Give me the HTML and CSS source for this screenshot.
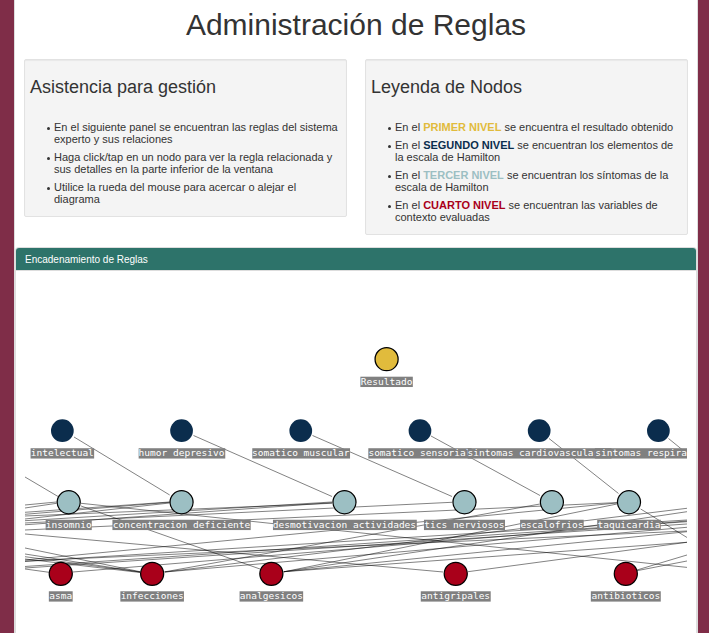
FILE: index.html
```html
<!DOCTYPE html>
<html lang="es">
<head>
<meta charset="utf-8">
<meta name="viewport" content="width=device-width, initial-scale=1">
<title>Administración de Reglas</title>
<link rel="stylesheet" href="styles.css">
</head>
<body>
<main class="page">
  <h1 class="title">Administración de Reglas</h1>
  <div class="intro">
    <section class="well">
      <h2 class="well-title">Asistencia para gestión</h2>
      <ul class="notes">
        <li>En el siguiente panel se encuentran las reglas del sistema experto y sus relaciones</li>
        <li>Haga click/tap en un nodo para ver la regla relacionada y sus detalles en la parte inferior de la ventana</li>
        <li>Utilice la rueda del mouse para acercar o alejar el diagrama</li>
      </ul>
    </section>
    <section class="well">
      <h2 class="well-title">Leyenda de Nodos</h2>
      <ul class="notes">
        <li>En el <strong class="level-1">PRIMER NIVEL</strong> se encuentra el resultado obtenido</li>
        <li>En el <strong class="level-2">SEGUNDO NIVEL</strong> se encuentran los elementos de la escala de Hamilton</li>
        <li>En el <strong class="level-3">TERCER NIVEL</strong> se encuentran los síntomas de la escala de Hamilton</li>
        <li>En el <strong class="level-4">CUARTO NIVEL</strong> se encuentran las variables de contexto evaluadas</li>
      </ul>
    </section>
  </div>
  <section class="panel">
    <h2 class="panel-heading">Encadenamiento de Reglas</h2>
    <div class="panel-body">
      <svg class="graph" viewBox="0 0 833 455" role="img" aria-label="Encadenamiento de Reglas">
        <g class="edges" transform="scale(1.2583) translate(-25 -271)">
          <path d="M74 437L169.700 495M193.500 435.500L332 496.500M312.500 435.500L452 496.500M431 436L540 495.500M549 438.500L618.500 493.500M668.500 438.500L690 456M25 477L58 496.500"/>
          <path d="M81 506L260 569M81 503.300L687 567.400M640.700 509L687 537.500"/>
          <path d="M56.700 502L25 505M56.700 503.300L25 508"/>
          <path d="M169.700 502L25 512.300"/><path d="M169.700 502.300L25 514.300"/><path d="M169.700 503L25 519"/>
          <path d="M332 502L25 520.700"/><path d="M332 502.700L25 524.800"/><path d="M332 503.300L25 516"/>
          <path d="M452 502.300L25 523"/><path d="M617 502.600L25 530"/>
          <path d="M540 504L164 572"/><path d="M617 503L25 560"/><path d="M617 504L283 572"/>
          <path d="M284 571.700L687 511.700"/><path d="M284 571.700L687 531.700"/><path d="M284 571.700L687 542.300"/>
          <path d="M468 571.700L687 542.300"/>
          <path d="M165 572L687 508.300"/><path d="M165 572L687 527.300"/>
          <path d="M687 520L25 561.500"/><path d="M687 521.700L25 566.500"/><path d="M687 524L25 568"/><path d="M687 531L25 561"/>
          <path d="M73 572L687 521"/>
          <path d="M25 534L443 572"/>
          <path d="M25 548L140 571.700"/><path d="M25 554L140 572"/><path d="M25 556.700L140 572"/><path d="M25 559L140 572.500"/>
          <path d="M25 569L49 572.300"/>
          <path d="M637 570L687 555"/><path d="M637 570.700L687 561"/>
        </g>
        <g class="node level-1"><circle cx="455" cy="111" r="14.500"/><rect x="422" y="133" width="66" height="13"/><text x="455" y="143">Resultado</text></g>
        <g class="node level-2"><circle cx="47" cy="201" r="14.300"/><rect x="7" y="223" width="80" height="13"/><text x="47" y="233">intelectual</text></g>
        <g class="node level-2"><circle cx="197" cy="201" r="14.300"/><rect x="143" y="223" width="109" height="13"/><text x="197" y="233">humor depresivo</text></g>
        <g class="node level-2"><circle cx="347" cy="201" r="14.300"/><rect x="286" y="223" width="123" height="13"/><text x="347" y="233">somatico muscular</text></g>
        <g class="node level-2"><circle cx="497" cy="201" r="14.300"/><rect x="432" y="223" width="130" height="13"/><text x="497" y="233">somatico sensorial</text></g>
        <g class="node level-2"><circle cx="647" cy="201" r="14.300"/><rect x="557" y="223" width="181" height="13"/><text x="647" y="233">sintomas cardiovasculares</text></g>
        <g class="node level-2"><circle cx="797" cy="201" r="14.300"/><rect x="717" y="223" width="160" height="13"/><text x="797" y="233">sintomas respiratorios</text></g>
        <g class="node level-3"><circle cx="55" cy="291" r="14.500"/><rect x="26" y="313" width="58" height="13"/><text x="55" y="323">insomnio</text></g>
        <g class="node level-3"><circle cx="197" cy="291" r="14.500"/><rect x="110" y="313" width="174" height="13"/><text x="197" y="323">concentracion deficiente</text></g>
        <g class="node level-3"><circle cx="402" cy="291" r="14.500"/><rect x="312" y="313" width="181" height="13"/><text x="402" y="323">desmotivacion actividades</text></g>
        <g class="node level-3"><circle cx="553" cy="291" r="14.500"/><rect x="502" y="313" width="102" height="13"/><text x="553" y="323">tics nerviosos</text></g>
        <g class="node level-3"><circle cx="663" cy="291" r="14.500"/><rect x="623" y="313" width="80" height="13"/><text x="663" y="323">escalofrios</text></g>
        <g class="node level-3"><circle cx="760" cy="291" r="14.500"/><rect x="720" y="313" width="80" height="13"/><text x="760" y="323">taquicardia</text></g>
        <g class="node level-4"><circle cx="45" cy="381" r="14.500"/><rect x="30" y="403" width="30" height="13"/><text x="45" y="413">asma</text></g>
        <g class="node level-4"><circle cx="160" cy="381" r="14.500"/><rect x="120" y="403" width="80" height="13"/><text x="160" y="413">infecciones</text></g>
        <g class="node level-4"><circle cx="310" cy="381" r="14.500"/><rect x="270" y="403" width="80" height="13"/><text x="310" y="413">analgesicos</text></g>
        <g class="node level-4"><circle cx="542" cy="381" r="14.500"/><rect x="498" y="403" width="88" height="13"/><text x="542" y="413">antigripales</text></g>
        <g class="node level-4"><circle cx="756" cy="381" r="14.500"/><rect x="712" y="403" width="88" height="13"/><text x="756" y="413">antibioticos</text></g>
      </svg>
    </div>
  </section>
</main>
</body>
</html>
```
FILE: styles.css
```css
* { box-sizing: border-box; }

body {
  margin: 0;
  padding: 0 11px 0 14px;
  background: #7f2d48;
  color: #333;
  font: 11px/12px "Liberation Sans", Arial, sans-serif;
}

.page {
  min-height: 100vh;
  background: #fff;
  border: solid #ddd;
  border-width: 0 1px;
}

.title {
  margin: 0;
  padding: 8px 0 18px;
  font-size: 30px;
  font-weight: 400;
  line-height: 33px;
  text-align: center;
}

.intro {
  display: grid;
  grid-template-columns: 1fr 1fr;
  align-items: start;
  gap: 18px;
  padding: 0 9px;
}

.well {
  padding: 5px;
  background: #f4f4f4;
  border: 1px solid #e2e2e2;
  border-radius: 2px;
  box-shadow: inset 0 1px 1px rgba(0, 0, 0, .05);
}

.well-title {
  margin: 12px 0 23px;
  font-size: 18px;
  font-weight: 400;
  line-height: 21px;
}

.notes {
  margin: 0;
  padding: 0 0 0 24px;
  list-style: none;
}

.notes li { margin-bottom: 6px; }

.notes li::before {
  content: "";
  float: left;
  width: 3px;
  height: 3px;
  margin: 6px 0 0 -7px;
  border-radius: 50%;
  background: #333;
}

strong.level-1 { color: #e1bb3c; }
strong.level-2 { color: #0b2d4d; }
strong.level-3 { color: #9cbfc3; }
strong.level-4 { color: #a9001a; }

.panel {
  margin-top: 12px;
  border: 1px solid #ddd;
  border-bottom: 0;
  border-radius: 4px 4px 0 0;
}

.panel-heading {
  margin: 0;
  padding: 6px 9px 4px;
  background: #2d736a;
  border-bottom: 1px solid #ddd;
  border-radius: 3px 3px 0 0;
  color: #fff;
  font-size: 10px;
  font-weight: 400;
  line-height: 12px;
}

.panel-body { padding: 0 9px; }

.graph {
  display: block;
  width: 100%;
  height: auto;
  overflow: hidden;
}

.edges path {
  fill: none;
  stroke: #000;
  stroke-opacity: .55;
  stroke-width: .9;
}

.node circle { stroke: #000; stroke-width: 1.6; }
.node rect { fill: #808080; }

.node text {
  fill: #fff;
  font: 12px "DejaVu Sans Mono", monospace;
  text-anchor: middle;
}

.node.level-1 circle { fill: #e1bb3c; }
.node.level-2 circle { fill: #0b2d4d; stroke: none; }
.node.level-3 circle { fill: #9cbfc3; }
.node.level-4 circle { fill: #a9001a; }
```
